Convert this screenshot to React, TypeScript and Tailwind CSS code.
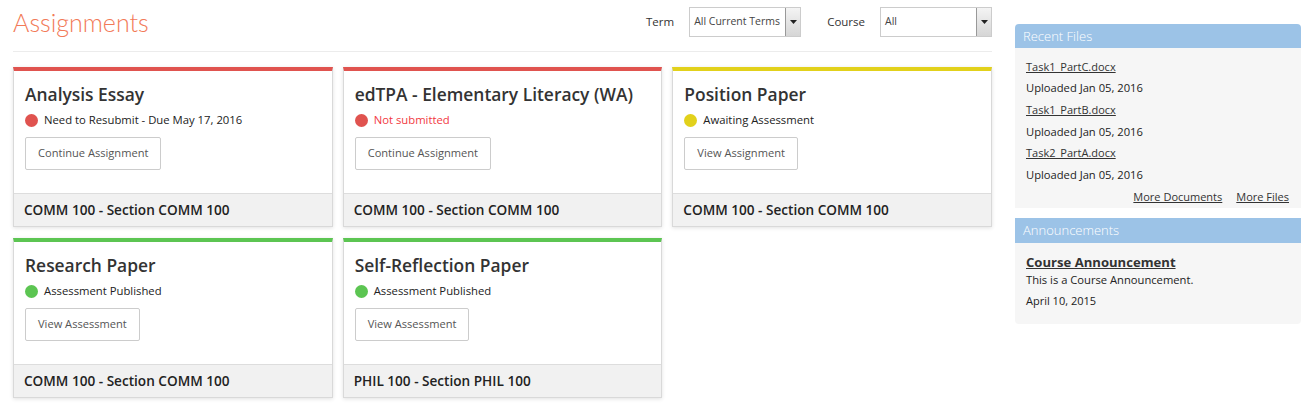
import React from "react";

type Card = {
  title: string;
  status: string;
  color: "red" | "yellow" | "green";
  statusRed?: boolean;
  action: string;
  course: string;
};

const cards: Card[] = [
  { title: "Analysis Essay", status: "Need to Resubmit - Due May 17, 2016", color: "red", action: "Continue Assignment", course: "COMM 100 - Section COMM 100" },
  { title: "edTPA - Elementary Literacy (WA)", status: "Not submitted", color: "red", statusRed: true, action: "Continue Assignment", course: "COMM 100 - Section COMM 100" },
  { title: "Position Paper", status: "Awaiting Assessment", color: "yellow", action: "View Assignment", course: "COMM 100 - Section COMM 100" },
  { title: "Research Paper", status: "Assessment Published", color: "green", action: "View Assessment", course: "COMM 100 - Section COMM 100" },
  { title: "Self-Reflection Paper", status: "Assessment Published", color: "green", action: "View Assessment", course: "PHIL 100 - Section PHIL 100" },
];

const topColor = {
  red: "border-t-[#e0534f]",
  yellow: "border-t-[#e2d11b]",
  green: "border-t-[#5cc552]",
};
const dotColor = {
  red: "bg-[#e0534f]",
  yellow: "bg-[#e2d11b]",
  green: "bg-[#5cc552]",
};

function AssignmentCard({ card }: { card: Card }) {
  return (
    <div className={`flex h-[160px] flex-col border border-[#d9d9d9] border-t-4 ${topColor[card.color]} bg-white shadow-[0_1px_4px_rgba(0,0,0,0.12)]`}>
      <div className="flex-1 px-[11px] pt-[11px]">
        <div className="text-[17.4px] leading-6 font-semibold text-[#333]">{card.title}</div>
        <div className="mt-[5px] flex h-[18px] items-center gap-[6px]">
          <span className={`h-[13px] w-[13px] rounded-full ${dotColor[card.color]}`}></span>
          <span className={`text-[11.3px] ${card.statusRed ? "text-[#f2393f]" : "text-[#222]"}`}>{card.status}</span>
        </div>
        <button className="mt-[8px] h-[33px] rounded-[2px] border border-[#ccc] bg-white px-3 text-[11.1px] text-[#555]">
          {card.action}
        </button>
      </div>
      <div className="flex h-[33px] items-center border-t border-[#ddd] bg-[#f1f1f1] px-[10px] text-[13.6px] font-semibold text-[#222]">
        {card.course}
      </div>
    </div>
  );
}

function Select({ value, width }: { value: string; width: string }) {
  return (
    <div className={`flex h-[30px] ${width} border border-[#ccc] bg-white`}>
      <div className="flex flex-1 items-center overflow-hidden whitespace-nowrap px-[4px] text-[10.5px] text-[#444]">{value}</div>
      <div className="flex w-[15px] items-center justify-center border-l border-[#999] bg-gradient-to-b from-[#f4f4f4] to-[#d6d6d6]">
        <svg width="7" height="4" viewBox="0 0 7 4"><path d="M0 0h7L3.5 4z" fill="#222" /></svg>
      </div>
    </div>
  );
}

export default function App() {
  return (
    <div className="flex h-[409px] w-[1311px] bg-white font-['Open_Sans',sans-serif]">
      <div className="ml-[13px] w-[979px]">
        <div className="flex h-[52px] items-start border-b border-[#ececec]">
          <h1 className="mt-[6px] font-['Lato',sans-serif] text-[25px] font-light leading-8 text-[#f27a58]">Assignments</h1>
          <div className="ml-auto mt-[7px] flex items-start">
            <span className="mt-[6px] mr-[15px] text-[11.5px] text-[#333]">Term</span>
            <Select value="All Current Terms" width="w-[112px]" />
            <span className="mt-[6px] ml-[26px] mr-[15px] text-[11.5px] text-[#333]">Course</span>
            <Select value="All" width="w-[112px]" />
          </div>
        </div>
        <div className="mt-[15px] grid grid-cols-3 gap-x-[10px] gap-y-[11px]">
          {cards.map((c) => (
            <AssignmentCard key={c.title} card={c} />
          ))}
        </div>
      </div>
      <div className="ml-[23px] mt-[24px] w-[286px]">
        <div className="rounded-t-[4px] bg-[#9cc3e7] px-[8px] text-[13px] font-light leading-6 text-white">Recent Files</div>
        <div className="bg-[#f6f6f6] px-[11px] pt-[8px] text-[#222]">
          {["Task1_PartC.docx", "Task1_PartB.docx", "Task2_PartA.docx"].map((f) => (
            <div key={f}>
              <div className="flex h-[21.7px] items-center text-[11px] text-[#333] underline">{f}</div>
              <div className="flex h-[21.7px] items-center text-[11.2px]">Uploaded Jan 05, 2016</div>
            </div>
          ))}
          <div className="flex h-[21.7px] items-center justify-end gap-[14px] pr-[1px] text-[11px] text-[#333] underline">
            <span>More Documents </span>
            <span>More Files</span>
          </div>
        </div>
        <div className="mt-[10px] bg-[#9cc3e7] px-[8px] text-[13px] font-light leading-[25px] text-white">Announcements</div>
        <div className="rounded-b-[4px] bg-[#f6f6f6] px-[11px] pt-[10px] pb-[15px] text-[#222]">
          <div className="text-[13.1px] font-bold leading-[19px] text-[#333] underline">Course Announcement</div>
          <div className="text-[11.2px] leading-[16px]">This is a Course Announcement.</div>
          <div className="mt-[5px] text-[11px] leading-[16px]">April 10, 2015</div>
        </div>
      </div>
    </div>
  );
}
